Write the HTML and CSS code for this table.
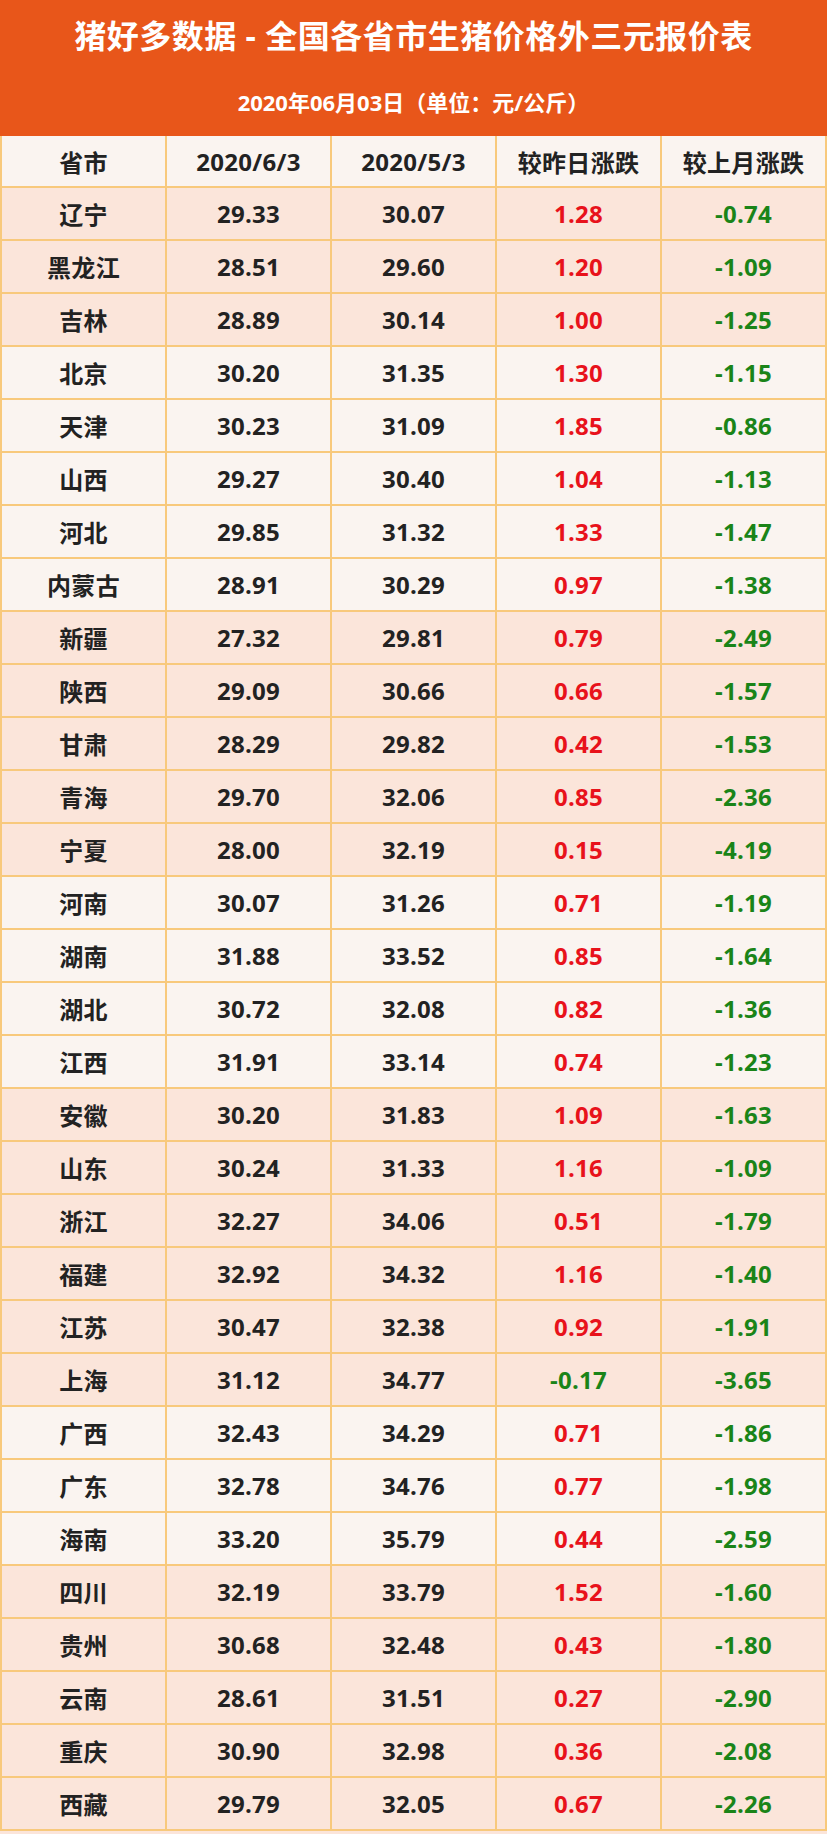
FILE: index.html
```html
<!DOCTYPE html>
<html lang="zh-CN">
<head>
<meta charset="utf-8">
<title>猪好多数据 - 全国各省市生猪价格外三元报价表</title>
<link rel="stylesheet" href="styles.css">
</head>
<body>
<div class="page">
  <header class="banner">
    <h1 class="title">猪好多数据 - 全国各省市生猪价格外三元报价表</h1>
    <p class="subtitle">2020年06月03日（单位：元/公斤）</p>
  </header>
  <div class="table">
    <div class="row head"><div class="cell">省市</div><div class="cell">2020/6/3</div><div class="cell">2020/5/3</div><div class="cell">较昨日涨跌</div><div class="cell">较上月涨跌</div></div>
    <div class="row peach"><div class="cell">辽宁</div><div class="cell">29.33</div><div class="cell">30.07</div><div class="cell up">1.28</div><div class="cell down">-0.74</div></div>
    <div class="row peach"><div class="cell">黑龙江</div><div class="cell">28.51</div><div class="cell">29.60</div><div class="cell up">1.20</div><div class="cell down">-1.09</div></div>
    <div class="row peach"><div class="cell">吉林</div><div class="cell">28.89</div><div class="cell">30.14</div><div class="cell up">1.00</div><div class="cell down">-1.25</div></div>
    <div class="row light"><div class="cell">北京</div><div class="cell">30.20</div><div class="cell">31.35</div><div class="cell up">1.30</div><div class="cell down">-1.15</div></div>
    <div class="row light"><div class="cell">天津</div><div class="cell">30.23</div><div class="cell">31.09</div><div class="cell up">1.85</div><div class="cell down">-0.86</div></div>
    <div class="row light"><div class="cell">山西</div><div class="cell">29.27</div><div class="cell">30.40</div><div class="cell up">1.04</div><div class="cell down">-1.13</div></div>
    <div class="row light"><div class="cell">河北</div><div class="cell">29.85</div><div class="cell">31.32</div><div class="cell up">1.33</div><div class="cell down">-1.47</div></div>
    <div class="row light"><div class="cell">内蒙古</div><div class="cell">28.91</div><div class="cell">30.29</div><div class="cell up">0.97</div><div class="cell down">-1.38</div></div>
    <div class="row peach"><div class="cell">新疆</div><div class="cell">27.32</div><div class="cell">29.81</div><div class="cell up">0.79</div><div class="cell down">-2.49</div></div>
    <div class="row peach"><div class="cell">陕西</div><div class="cell">29.09</div><div class="cell">30.66</div><div class="cell up">0.66</div><div class="cell down">-1.57</div></div>
    <div class="row peach"><div class="cell">甘肃</div><div class="cell">28.29</div><div class="cell">29.82</div><div class="cell up">0.42</div><div class="cell down">-1.53</div></div>
    <div class="row peach"><div class="cell">青海</div><div class="cell">29.70</div><div class="cell">32.06</div><div class="cell up">0.85</div><div class="cell down">-2.36</div></div>
    <div class="row peach"><div class="cell">宁夏</div><div class="cell">28.00</div><div class="cell">32.19</div><div class="cell up">0.15</div><div class="cell down">-4.19</div></div>
    <div class="row light"><div class="cell">河南</div><div class="cell">30.07</div><div class="cell">31.26</div><div class="cell up">0.71</div><div class="cell down">-1.19</div></div>
    <div class="row light"><div class="cell">湖南</div><div class="cell">31.88</div><div class="cell">33.52</div><div class="cell up">0.85</div><div class="cell down">-1.64</div></div>
    <div class="row light"><div class="cell">湖北</div><div class="cell">30.72</div><div class="cell">32.08</div><div class="cell up">0.82</div><div class="cell down">-1.36</div></div>
    <div class="row light"><div class="cell">江西</div><div class="cell">31.91</div><div class="cell">33.14</div><div class="cell up">0.74</div><div class="cell down">-1.23</div></div>
    <div class="row peach"><div class="cell">安徽</div><div class="cell">30.20</div><div class="cell">31.83</div><div class="cell up">1.09</div><div class="cell down">-1.63</div></div>
    <div class="row peach"><div class="cell">山东</div><div class="cell">30.24</div><div class="cell">31.33</div><div class="cell up">1.16</div><div class="cell down">-1.09</div></div>
    <div class="row peach"><div class="cell">浙江</div><div class="cell">32.27</div><div class="cell">34.06</div><div class="cell up">0.51</div><div class="cell down">-1.79</div></div>
    <div class="row peach"><div class="cell">福建</div><div class="cell">32.92</div><div class="cell">34.32</div><div class="cell up">1.16</div><div class="cell down">-1.40</div></div>
    <div class="row peach"><div class="cell">江苏</div><div class="cell">30.47</div><div class="cell">32.38</div><div class="cell up">0.92</div><div class="cell down">-1.91</div></div>
    <div class="row peach"><div class="cell">上海</div><div class="cell">31.12</div><div class="cell">34.77</div><div class="cell down">-0.17</div><div class="cell down">-3.65</div></div>
    <div class="row light"><div class="cell">广西</div><div class="cell">32.43</div><div class="cell">34.29</div><div class="cell up">0.71</div><div class="cell down">-1.86</div></div>
    <div class="row light"><div class="cell">广东</div><div class="cell">32.78</div><div class="cell">34.76</div><div class="cell up">0.77</div><div class="cell down">-1.98</div></div>
    <div class="row light"><div class="cell">海南</div><div class="cell">33.20</div><div class="cell">35.79</div><div class="cell up">0.44</div><div class="cell down">-2.59</div></div>
    <div class="row peach"><div class="cell">四川</div><div class="cell">32.19</div><div class="cell">33.79</div><div class="cell up">1.52</div><div class="cell down">-1.60</div></div>
    <div class="row peach"><div class="cell">贵州</div><div class="cell">30.68</div><div class="cell">32.48</div><div class="cell up">0.43</div><div class="cell down">-1.80</div></div>
    <div class="row peach"><div class="cell">云南</div><div class="cell">28.61</div><div class="cell">31.51</div><div class="cell up">0.27</div><div class="cell down">-2.90</div></div>
    <div class="row peach"><div class="cell">重庆</div><div class="cell">30.90</div><div class="cell">32.98</div><div class="cell up">0.36</div><div class="cell down">-2.08</div></div>
    <div class="row peach"><div class="cell">西藏</div><div class="cell">29.79</div><div class="cell">32.05</div><div class="cell up">0.67</div><div class="cell down">-2.26</div></div>
  </div>
</div>
</body>
</html>
```
FILE: styles.css
```css
* { box-sizing: border-box; }
html, body { margin: 0; padding: 0; }
body {
  width: 827px;
  background: #fbe5da;
  font-family: "Open Sans", "Noto Sans CJK SC", sans-serif;
  font-weight: 700;
  color: #222222;
}
.page { width: 827px; }
.banner {
  height: 136px;
  background: #e8561a;
  color: #ffffff;
  text-align: center;
  padding-top: 14px;
}
.title {
  margin: 0;
  font-size: 32px;
  line-height: 44px;
  font-weight: 700;
  letter-spacing: 0.5px;
}
.subtitle {
  margin: 29px 0 0;
  font-size: 22px;
  line-height: 30px;
  font-weight: 700;
}
.table {
  border-left: 2px solid #f8c97c;
}
.row {
  display: grid;
  grid-template-columns: repeat(5, 1fr);
  height: 53px;
}
.row.head { height: 52px; background: #faf4f0; }
.row.light { background: #faf4f0; }
.row.peach { background: #fbe5da; }
.cell {
  display: flex;
  align-items: center;
  justify-content: center;
  border-right: 2px solid #f8c97c;
  border-bottom: 2px solid #f8c97c;
  font-size: 24px;
  letter-spacing: 0.3px;
}
.cell.up { color: #e8121b; }
.cell.down { color: #1a8418; }
```
